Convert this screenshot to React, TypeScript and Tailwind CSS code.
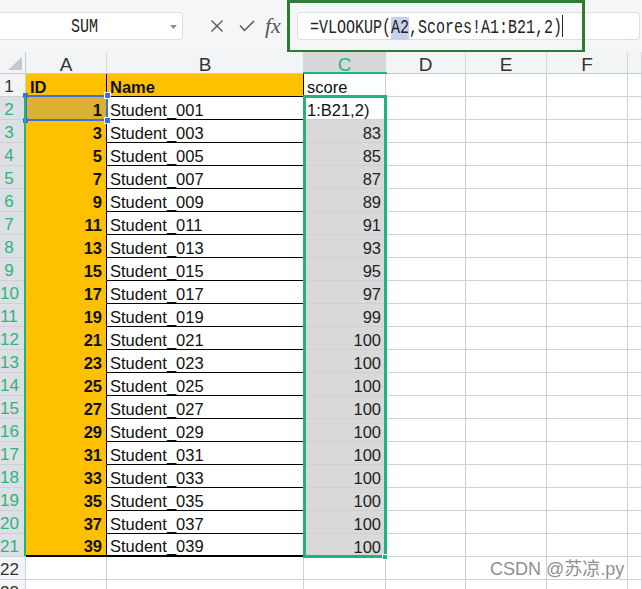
import React from 'react';

// Spreadsheet screenshot: WPS-style grid with a VLOOKUP formula being edited.

const COL_HEADERS = [
  { label: 'A', w: 'w-[81px]' },
  { label: 'B', w: 'w-[197px]' },
  { label: 'C', w: 'w-[82px]' },
  { label: 'D', w: 'w-[80px]' },
  { label: 'E', w: 'w-[81px]' },
  { label: 'F', w: 'w-[81px]' },
  { label: '', w: 'w-[14px]' },
];

const rows = Array.from({ length: 20 }, (_, i) => {
  const id = i * 2 + 1;
  return {
    n: i + 2,
    id,
    name: `Student_${String(id).padStart(3, '0')}`,
    score: Math.min(80 + id, 100),
  };
});

const cell =
  'h-full shrink-0 border-r border-[#ccd0da] flex items-center pt-[4px] overflow-hidden whitespace-nowrap';

function RowHeader({ n, selected }: { n: number; selected?: boolean }) {
  return (
    <div
      className={`w-[26px] h-full shrink-0 border-r border-b border-[#ccd0da] flex items-center pt-[4px] text-[17px] ${
        selected ? 'bg-[#dcdfe3] text-[#2fb37c]' : 'bg-[#f3f4f6] text-[#333]'
      }`}
    >
      <span className="w-[18px] text-center">{n}</span>
    </div>
  );
}

function EmptyCells() {
  return (
    <>
      <div className={`${cell} border-b w-[80px]`} />
      <div className={`${cell} border-b w-[81px]`} />
      <div className={`${cell} border-b w-[81px]`} />
      <div className={`${cell} border-b w-[14px]`} />
    </>
  );
}

export default function App() {
  return (
    <div
      className="relative w-[642px] h-[589px] overflow-hidden bg-white text-[#111]"
      style={{ fontFamily: '"Liberation Sans", Arial, "Noto Sans CJK SC", sans-serif' }}
    >
      {/* Toolbar: name box + formula bar */}
      <div className="h-[52px] bg-[#f5f6f8] flex items-center">
        <div className="ml-[-3px] w-[186px] h-[28px] shrink-0 rounded-[3px] border border-[#dcdfe4] bg-white flex items-center relative">
          <span className="ml-[73px] translate-y-[2px] font-['Liberation_Mono',monospace] text-[15px] inline-block scale-y-[1.35] text-[#222]">
            SUM
          </span>
          <svg className="absolute right-[5px] top-[12px]" width="7" height="4" viewBox="0 0 7 4">
            <path d="M0 0 L7 0 L3.5 4 Z" fill="#8a8d93" />
          </svg>
        </div>
        <div className="w-[27px] shrink-0" />
        <svg className="shrink-0" width="14" height="14" viewBox="0 0 14 14">
          <path d="M1.5 1.5 L12.5 12.5 M12.5 1.5 L1.5 12.5" stroke="#555" strokeWidth="1.4" fill="none" />
        </svg>
        <div className="w-[15px] shrink-0" />
        <svg className="shrink-0" width="16" height="12" viewBox="0 0 16 12">
          <path d="M1 5.5 L5.5 10.5 L15 1" stroke="#555" strokeWidth="1.5" fill="none" />
        </svg>
        <div className="w-[10px] shrink-0" />
        <div className="w-[24px] shrink-0 font-['Liberation_Serif',serif] italic text-[22px] text-[#555] leading-none">
          fx
        </div>
        <div className="w-[8px] shrink-0" />
        <div className="flex-1 mr-[2px] h-[28px] rounded-[3px] border border-[#dcdfe4] bg-white flex items-center pl-[12px]">
          <span className="translate-y-[2px] font-['Liberation_Mono',monospace] text-[15px] inline-block scale-y-[1.35] text-[#222] whitespace-pre leading-[17px]">
            =VLOOKUP(<span className="bg-[#c7d1ee]">A2</span>,Scores!A1:B21,2)
          </span>
          <span className="w-px h-[22px] bg-[#222]" />
        </div>
      </div>

      {/* Green annotation box around the formula */}
      <div className="absolute left-[287px] top-0 w-[298px] h-[53px] border-[3px] border-[#2e7d32]" />

      {/* Sheet */}
      <div className="relative">
        {/* Column headers */}
        <div className="flex h-[22px] bg-[#f3f4f6] text-[19px] text-[#333]">
          <div className="w-[26px] h-full shrink-0 border-r border-b border-[#c4c8d0] flex items-end justify-end pr-[3px] pb-[3px]">
            <svg width="14" height="13" viewBox="0 0 14 13">
              <path d="M14 0 L14 13 L0 13 Z" fill="#c4c7cc" />
            </svg>
          </div>
          {COL_HEADERS.map((c) => (
            <div
              key={c.label || 'g'}
              className={`${c.w} h-full shrink-0 border-r border-b border-r-[#d4d7dd] border-b-[#c4c8d0] flex items-center justify-center pt-[5px] ${
                c.label === 'C' ? 'bg-[#d6d8dc] text-[#2fb37c]' : ''
              }`}
            >
              {c.label}
            </div>
          ))}
        </div>

        {/* Row 1 */}
        <div className="flex h-[23px] text-[16.5px]">
          <RowHeader n={1} />
          <div className={`${cell} w-[81px] border-b bg-[#ffc000] border-r-black border-b-black pl-[4px] font-bold`}>ID</div>
          <div className={`${cell} w-[197px] border-b bg-[#ffc000] border-r-black border-b-black pl-[3px] font-bold`}>Name</div>
          <div className={`${cell} w-[82px] border-b pl-[3px]`}>score</div>
          <EmptyCells />
        </div>

        {/* Data rows */}
        {rows.map((r) => {
          const last = r.n === 21;
          return (
            <div key={r.n} className="flex h-[23px] text-[16.5px]">
              <RowHeader n={r.n} selected />
              <div
                className={`${cell} w-[81px] ${last ? 'border-b-2 border-b-black' : 'border-b border-b-[#ffc000]'} ${
                  r.n === 2 ? 'bg-[#dcb032]' : 'bg-[#ffc000]'
                } border-r-black justify-end pr-[4px] font-bold`}
              >
                {r.id}
              </div>
              <div
                className={`${cell} w-[197px] ${last ? 'border-b-2' : 'border-b'} border-b-black border-r-black pl-[3px]`}
              >
                {r.name}
              </div>
              {r.n === 2 ? (
                <div className={`${cell} w-[82px] border-b pl-[3px]`}>1:B21,2)</div>
              ) : (
                <div className={`${cell} w-[82px] border-b bg-[#d9d9d9] justify-end pr-[4px] text-[#222]`}>
                  {r.score}
                </div>
              )}
              <EmptyCells />
            </div>
          );
        })}

        {/* Empty rows below */}
        {[22, 23].map((n) => (
          <div key={n} className="flex h-[23px]">
            <RowHeader n={n} />
            <div className={`${cell} border-b w-[81px]`} />
            <div className={`${cell} border-b w-[197px]`} />
            <div className={`${cell} border-b w-[82px]`} />
            <EmptyCells />
          </div>
        ))}

        {/* Active cell A2 */}
        <div className="absolute left-[25px] top-[43px] w-[83px] h-[26px] border-2 border-[#3f6fd8]">
          <span className="absolute -left-[4px] -top-[4px] w-[5px] h-[5px] bg-[#3f6fd8]" />
          <span className="absolute -right-[5px] -top-[5px] w-[7px] h-[7px] bg-[#3f6fd8] border border-white" />
          <span className="absolute -left-[4px] -bottom-[4px] w-[5px] h-[5px] bg-[#3f6fd8]" />
          <span className="absolute -right-[5px] -bottom-[5px] w-[7px] h-[7px] bg-[#3f6fd8] border border-white" />
        </div>

        {/* Referenced range C2:C21 */}
        <div className="absolute left-[303px] top-[43px] w-[84px] h-[463px] border-[3px] border-[#1db57a]" />
        <div className="absolute left-[382px] top-[502px] w-[6px] h-[6px] bg-[#1db57a] border border-white" />
        <div className="absolute left-[24px] top-[45px] w-[2px] h-[459px] bg-[#1db57a]" />
        <div className="absolute left-[303px] top-[20px] w-[84px] h-[2px] bg-[#1db57a]" />
      </div>

      {/* Watermark */}
      <div className="absolute left-[490px] top-[557px] text-[18px] leading-[24px] text-[#8f8f8f] [text-shadow:0_0_2px_#fff]">
        CSDN @苏凉.py
      </div>
    </div>
  );
}
